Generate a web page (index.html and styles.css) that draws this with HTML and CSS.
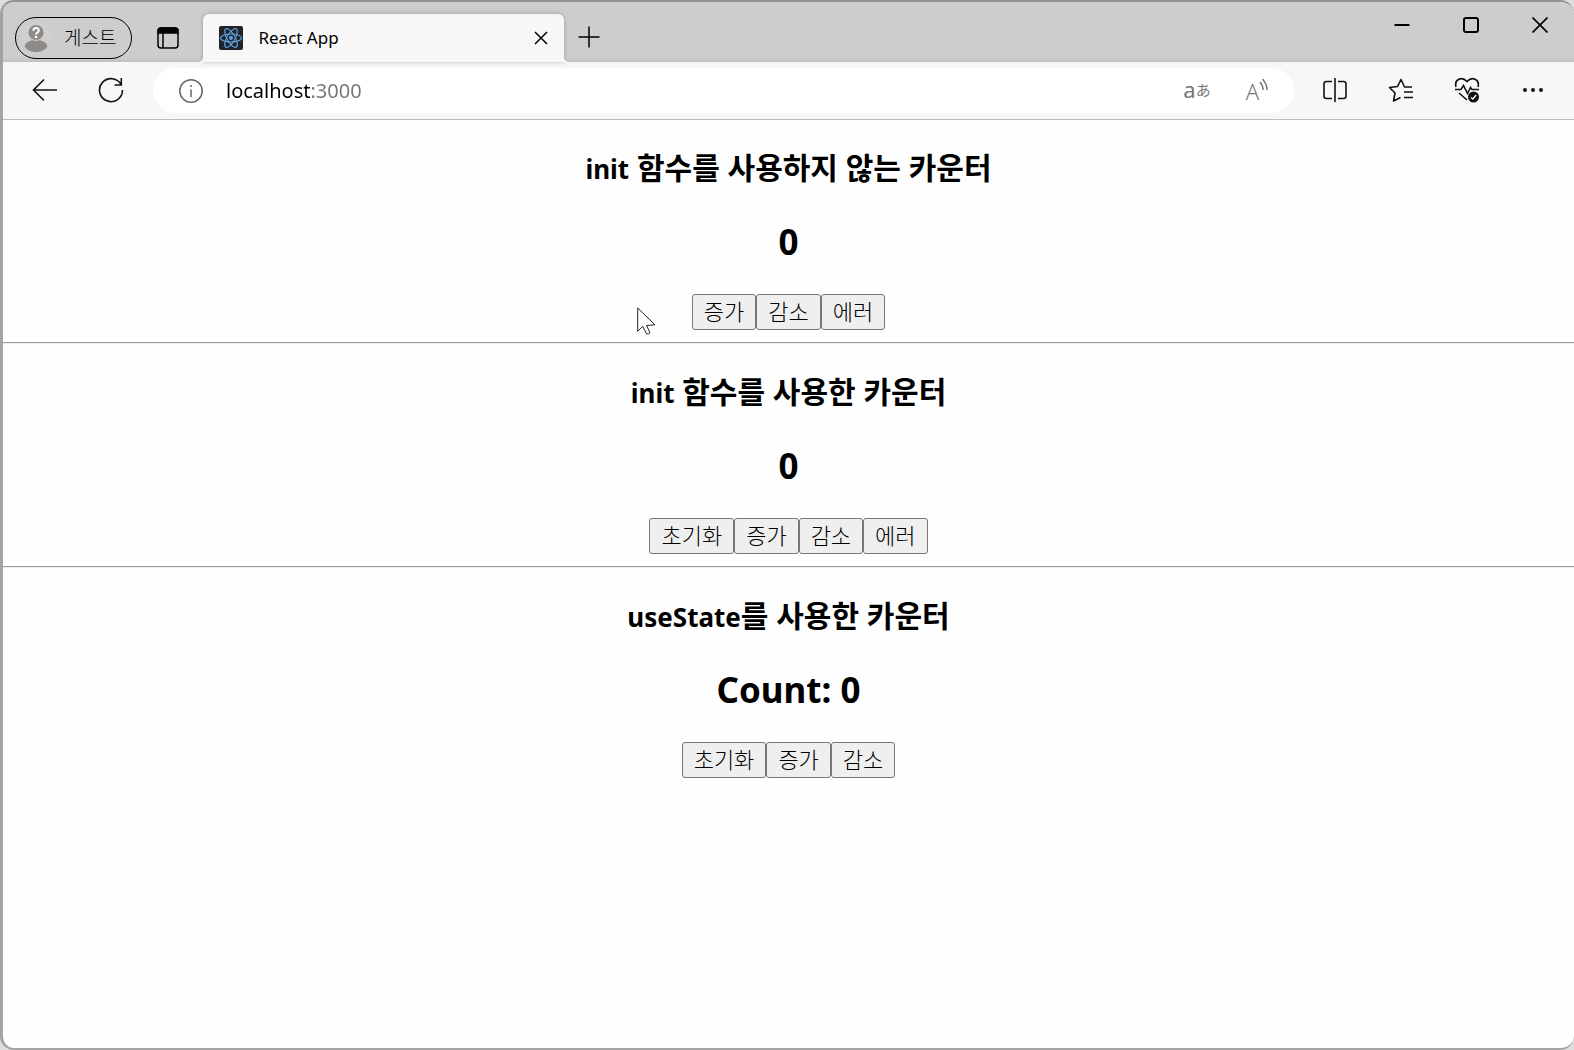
FILE: index.html
```html
<!DOCTYPE html>
<html lang="ko">
<head>
<meta charset="utf-8">
<meta name="viewport" content="width=device-width, initial-scale=1">
<title>React App</title>
<link rel="stylesheet" href="styles.css">
</head>
<body>
<div class="window">
  <header class="titlebar">
    <button class="profile" type="button">
      <svg width="30" height="30" viewBox="0 0 30 30" aria-hidden="true">
        <circle cx="15" cy="15" r="15" fill="#d2d0ce"/>
        <path d="M3.500 24.500C5.500 15.500 24.500 15.500 26.500 24.500C21 32 9 32 3.500 24.500Z" fill="#8d8a87"/>
        <circle cx="15" cy="10.500" r="8" fill="#8d8a87" stroke="#d2d0ce"/>
        <path d="M12.300 8.700C12.300 5 17.800 5 17.800 8.500C17.800 10.500 15 10.500 15 12.500" fill="none" stroke="#fff" stroke-width="2"/>
        <circle cx="15" cy="15" r="1.300" fill="#fff"/>
      </svg>
      <span>게스트</span>
    </button>
    <button class="tab-actions" type="button" aria-label="탭 작업 메뉴">
      <svg width="22" height="22" viewBox="0 0 22 22" fill="none" stroke="#000" stroke-width="1.500" aria-hidden="true">
        <rect x="1" y="1" width="20" height="20" rx="3"/>
        <path d="M1 4a3 3 0 0 1 3-3h14a3 3 0 0 1 3 3v2H1z" fill="#000"/>
        <path d="M6 6v15"/>
      </svg>
    </button>
    <div class="tab">
      <svg width="24" height="24" viewBox="0 0 24 24" aria-hidden="true">
        <rect width="24" height="24" rx="2" fill="#20232a"/>
        <g fill="none" stroke="#61a8e8" stroke-width="1.100">
          <ellipse cx="12" cy="12" rx="10.500" ry="4"/>
          <ellipse cx="12" cy="12" rx="10.500" ry="4" transform="rotate(60 12 12)"/>
          <ellipse cx="12" cy="12" rx="10.500" ry="4" transform="rotate(120 12 12)"/>
        </g>
        <circle cx="12" cy="12" r="2" fill="#61a8e8"/>
      </svg>
      <span class="tab-title">React App</span>
      <button class="tab-close" type="button" aria-label="탭 닫기">
        <svg width="14" height="14" viewBox="0 0 14 14" stroke="#000" stroke-width="1.500" aria-hidden="true"><path d="M1 1l12 12M13 1L1 13"/></svg>
      </button>
    </div>
    <button class="new-tab" type="button" aria-label="새 탭">
      <svg width="22" height="22" viewBox="0 0 22 22" stroke="#000" stroke-width="1.500" aria-hidden="true"><path d="M.5 11h21M11 .5v21"/></svg>
    </button>
    <div class="window-controls">
      <button type="button" aria-label="최소화"><svg width="16" height="16" viewBox="0 0 16 16" aria-hidden="true"><path d="M.5 8h15" stroke="#000" stroke-width="2"/></svg></button>
      <button type="button" aria-label="최대화"><svg width="16" height="16" viewBox="0 0 16 16" aria-hidden="true"><rect x="1" y="1" width="14" height="14" rx="2" fill="none" stroke="#000" stroke-width="2"/></svg></button>
      <button type="button" aria-label="닫기"><svg width="16" height="16" viewBox="0 0 16 16" aria-hidden="true"><path d="M.5.5l15 15M15.500.5l-15 15" stroke="#000" stroke-width="1.700"/></svg></button>
    </div>
  </header>

  <nav class="toolbar">
    <button class="tool" type="button" aria-label="뒤로">
      <svg width="26" height="26" viewBox="0 0 26 26" fill="none" stroke="#111" stroke-width="1.600" aria-hidden="true"><path d="M25 13H1.500M12 2.500L1.500 13L12 23.500"/></svg>
    </button>
    <button class="tool" type="button" aria-label="새로 고침">
      <svg width="26" height="26" viewBox="0 0 26 26" fill="none" stroke="#111" stroke-width="1.600" aria-hidden="true"><path d="M23.300 8A11.500 11.500 0 1 0 24.500 13M23.300 1v7H16.500"/></svg>
    </button>
    <form class="address">
      <button class="site-info" type="button" aria-label="사이트 정보">
        <svg width="24" height="24" viewBox="0 0 24 24" fill="none" stroke="#666" stroke-width="1.500" aria-hidden="true"><circle cx="12" cy="12" r="11.200"/><path d="M12 10.500v7.500M12 6v2"/></svg>
      </button>
      <input class="url" type="text" value="localhost:3000" aria-label="주소" spellcheck="false">
      <button class="field-action" type="button" aria-label="번역"><span class="translate-from">a</span><span class="translate-to">あ</span></button>
      <button class="field-action read-aloud" type="button" aria-label="소리내어 읽기">
        <span class="read-letter">A</span>
        <svg width="9" height="14" viewBox="0 0 9 14" fill="none" stroke="#767676" stroke-width="1.500" aria-hidden="true"><path d="M1 4q3 3 3 8M3.500 1q4.500 5 4.500 11"/></svg>
      </button>
    </form>
    <div class="tools">
      <button class="tool" type="button" aria-label="분할 화면">
        <svg width="24" height="24" viewBox="0 0 24 24" fill="none" stroke="#111" stroke-width="1.600" aria-hidden="true"><path d="M12 0v24M9 3.500H3.500a2.500 2.500 0 0 0-2.500 2.500v12a2.500 2.500 0 0 0 2.500 2.500H9M15 3.500h5.500a2.500 2.500 0 0 1 2.500 2.500v12a2.500 2.500 0 0 1-2.500 2.500H15"/></svg>
      </button>
      <button class="tool" type="button" aria-label="즐겨찾기">
        <svg width="26" height="26" viewBox="0 0 26 26" fill="none" stroke="#111" stroke-width="1.600" stroke-linejoin="round" aria-hidden="true"><path d="M24 10H16.500L13 2.500L9.500 9.500L1.500 10.500L7 16L5.500 24L12.500 20.500M16 15h9M16 20.500h9"/></svg>
      </button>
      <button class="tool" type="button" aria-label="브라우저 필수 정보">
        <svg width="26" height="26" viewBox="0 0 26 26" fill="none" stroke="#111" stroke-width="1.600" aria-hidden="true"><path d="M2 10C0 2 8-1 13 4.500C18-1 26 2 24 10M1 12.500h6l2.500-4 4 8 3-6 1.500 2h7M5 16l8 7"/><circle cx="19.500" cy="20" r="5.500" fill="#111" stroke="none"/><path d="M17 20.300l1.700 1.700 3.500-4" stroke="#fff" stroke-width="1.200"/></svg>
      </button>
      <button class="tool" type="button" aria-label="설정 및 기타">
        <svg width="22" height="22" viewBox="0 0 22 22" fill="#111" aria-hidden="true"><circle cx="3" cy="11" r="2"/><circle cx="11" cy="11" r="2"/><circle cx="19" cy="11" r="2"/></svg>
      </button>
    </div>
  </nav>

  <main class="page">
    <section class="counter">
      <h3><span class="latin">init</span> 함수를 사용하지 않는 카운터</h3>
      <h2>0</h2>
      <div class="actions"><button type="button">증가</button><button type="button">감소</button><button type="button">에러</button></div>
    </section>
    <section class="counter">
      <h3><span class="latin">init</span> 함수를 사용한 카운터</h3>
      <h2>0</h2>
      <div class="actions"><button type="button">초기화</button><button type="button">증가</button><button type="button">감소</button><button type="button">에러</button></div>
    </section>
    <section class="counter">
      <h3><span class="latin">useState</span>를 사용한 카운터</h3>
      <h2>Count: 0</h2>
      <div class="actions"><button type="button">초기화</button><button type="button">증가</button><button type="button">감소</button></div>
    </section>
  </main>
</div>
<svg class="pointer" width="19" height="28" viewBox="0 0 19 28" aria-hidden="true"><path d="M.7 1v23.300l5-5 3.800 7.500q2 .7 3.500-1l-3.500-7.300 8.500-.7z" fill="#fff" stroke="#222" stroke-width="1"/></svg>
</body>
</html>
```

FILE: styles.css
```css
* { box-sizing: border-box; }

body {
  margin: 0;
  background: #dedede;
  color: #000;
  font-family: "Noto Sans", "Noto Sans CJK KR", sans-serif;
}

button {
  padding: 0;
  border: 0;
  background: none;
  color: inherit;
  font-family: inherit;
}

svg { display: block; flex: none; }

.window {
  display: flex;
  flex-direction: column;
  min-height: 100vh;
  border: solid #a3a3a3;
  border-width: 2px 0 2px 3px;
  border-top-color: #929292;
  border-radius: 14px;
  background: #fefefe;
  overflow: hidden;
}

.titlebar {
  display: flex;
  align-items: flex-end;
  height: 60px;
  padding-left: 12px;
  background: linear-gradient(#cdcdcd 56px, #bfbfbf 60px);
}

.profile {
  display: flex;
  align-items: center;
  gap: 13px;
  height: 42px;
  margin-bottom: 3px;
  padding: 0 15px 2px 5px;
  border: 1px solid #000;
  border-radius: 21px;
  font-size: 19px;
  font-weight: 300;
}

.tab-actions { margin: 0 24px 13px 25px; }

.tab {
  position: relative;
  display: flex;
  align-items: center;
  width: 361px;
  height: 48px;
  padding: 0 16px 0 16px;
  border-radius: 6px 6px 0 0;
  background: #f7f7f7;
  box-shadow: 0 0 4px rgba(0, 0, 0, 0.25);
}

/* Flared feet where the tab joins the toolbar */
.tab::before,
.tab::after {
  content: "";
  position: absolute;
  bottom: 0;
  width: 5px;
  height: 5px;
}

.tab::before {
  right: 100%;
  background: radial-gradient(circle at 0 0, transparent 5px, #f7f7f7 5px);
}

.tab::after {
  left: 100%;
  background: radial-gradient(circle at 100% 0, transparent 5px, #f7f7f7 5px);
}

.tab-title { flex: 1; margin-left: 15px; padding-bottom: 2px; font-size: 17px; }

.new-tab { margin: 0 0 14px 14px; }

.window-controls { display: flex; align-self: flex-start; margin-left: auto; }

.window-controls button {
  display: grid;
  place-items: center;
  width: 69px;
  height: 46px;
}

.toolbar {
  display: flex;
  align-items: center;
  height: 58px;
  padding: 0 8px 0 9px;
  border-bottom: 1px solid #bdbdbd;
  background: #f7f7f7;
}

.tools { display: flex; }

.tool { display: grid; place-items: center; width: 66px; height: 45px; padding-bottom: 2px; }

.address {
  display: flex;
  flex: 1;
  align-items: center;
  height: 45px;
  margin: 0 8px 0 9px;
  padding: 0 7px 0 26px;
  border-radius: 23px;
  background: #fff;
}

.url {
  flex: 1;
  min-width: 0;
  height: 32px;
  margin-left: 23px;
  padding: 0;
  border: 0;
  outline: 0;
  background: linear-gradient(90deg, #000 84px, #767676 84px) text;
  color: transparent;
  font-family: inherit;
  font-size: 20px;
}

.field-action {
  display: flex;
  align-items: center;
  justify-content: center;
  width: 60px;
  height: 40px;
  padding-bottom: 3px;
  color: #767676;
}

.translate-from { font-size: 22px; }

.translate-to { font-size: 15px; }

.read-letter { font-size: 22px; font-weight: 300; }

.read-aloud { align-items: flex-start; }

.read-aloud svg { margin-top: 7px; }

.read-letter { line-height: 40px; }

.counter {
  padding: 28px 0 12px;
  text-align: center;
}

.counter + .counter {
  padding-top: 29px;
  border-top: 1px solid #999;
  box-shadow: inset 0 1px #eee;
}

.counter h3 { margin: 0; font-size: 30px; line-height: 40px; }

.latin { font-size: 26px; }

.counter h2 { margin: 29px 0 28px; font-size: 35px; line-height: 48px; }

.actions { display: flex; justify-content: center; }

.actions button {
  height: 36px;
  padding: 0 11px 2px;
  border: 1px solid #767676;
  border-radius: 3px;
  background: #efefef;
  font-size: 22px;
  font-weight: 300;
  line-height: 32px;
}

.pointer { position: absolute; top: 307px; left: 637px; }
```
